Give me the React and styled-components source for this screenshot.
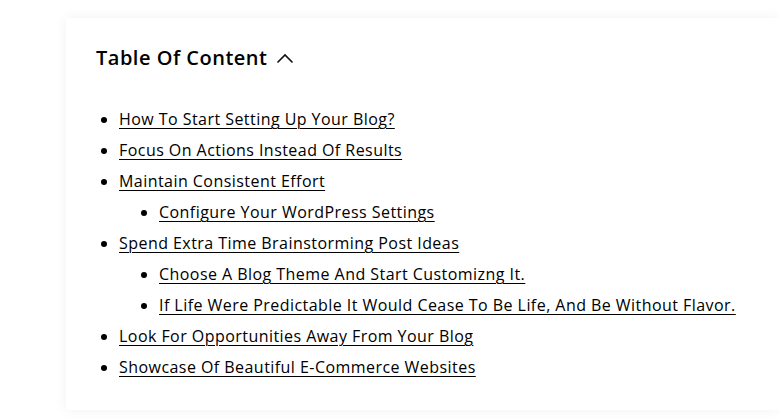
import React from "react";
import styled, { createGlobalStyle } from "styled-components";

const GlobalStyle = createGlobalStyle`
  html, body {
    margin: 0;
    padding: 0;
    background: #ffffff;
    overflow: hidden;
  }
  body {
    font-family: "Open Sans", "Liberation Sans", sans-serif;
    color: #000;
  }
`;

const Page = styled.div`
  padding: 18px 0 0 66px;
  width: 779px;
  height: 419px;
  box-sizing: border-box;
`;

const Card = styled.div`
  width: 713px;
  background: #fff;
  box-shadow: 0 0 12px rgba(0, 0, 0, 0.06);
  padding: 25px 30px 27px 30px;
  box-sizing: border-box;
`;

const Header = styled.div`
  display: flex;
  align-items: center;
  height: 30px;
  margin-bottom: 31px;
`;

const Title = styled.h2`
  margin: 0;
  font-size: 20px;
  font-weight: 600;
  line-height: 30px;
  letter-spacing: 0.5px;
  color: #000;
`;

const Toggle = styled.button`
  border: 0;
  background: none;
  padding: 0;
  margin-left: 9px;
  display: flex;
  align-items: center;
  cursor: pointer;
`;

const List = styled.ul`
  margin: 0;
  padding-left: ${(p) => (p.$nested ? "40px" : "23px")};
  list-style: disc;
`;

const Item = styled.li`
  font-size: 16px;
  line-height: 31px;
  letter-spacing: 0.45px;
`;

const Link = styled.a`
  color: #000;
  text-decoration: underline;
  text-underline-offset: 3px;
  text-decoration-thickness: 1px;
`;

const toc = [
  { text: "How To Start Setting Up Your Blog?" },
  { text: "Focus On Actions Instead Of Results" },
  {
    text: "Maintain Consistent Effort",
    children: ["Configure Your WordPress Settings"],
  },
  {
    text: "Spend Extra Time Brainstorming Post Ideas",
    children: [
      "Choose A Blog Theme And Start Customizng It.",
      "If Life Were Predictable It Would Cease To Be Life, And Be Without Flavor.",
    ],
  },
  { text: "Look For Opportunities Away From Your Blog" },
  { text: "Showcase Of Beautiful E-Commerce Websites" },
];

const Chevron = () => (
  <svg width="18" height="12" viewBox="0 0 18 12" fill="none">
    <polyline points="1.5,10.5 9,3 16.5,10.5" stroke="#111" strokeWidth="1.6" />
  </svg>
);

const App = () => {
  return (
    <Page>
      <GlobalStyle />
      <Card>
        <Header>
          <Title>Table Of Content</Title>
          <Toggle aria-label="Collapse">
            <Chevron />
          </Toggle>
        </Header>
        <List>
          {toc.map((item) => (
            <Item key={item.text}>
              <Link href="#">{item.text}</Link>
              {item.children && (
                <List $nested>
                  {item.children.map((c) => (
                    <Item key={c}>
                      <Link href="#">{c}</Link>
                    </Item>
                  ))}
                </List>
              )}
            </Item>
          ))}
        </List>
      </Card>
    </Page>
  );
};

export default App;
